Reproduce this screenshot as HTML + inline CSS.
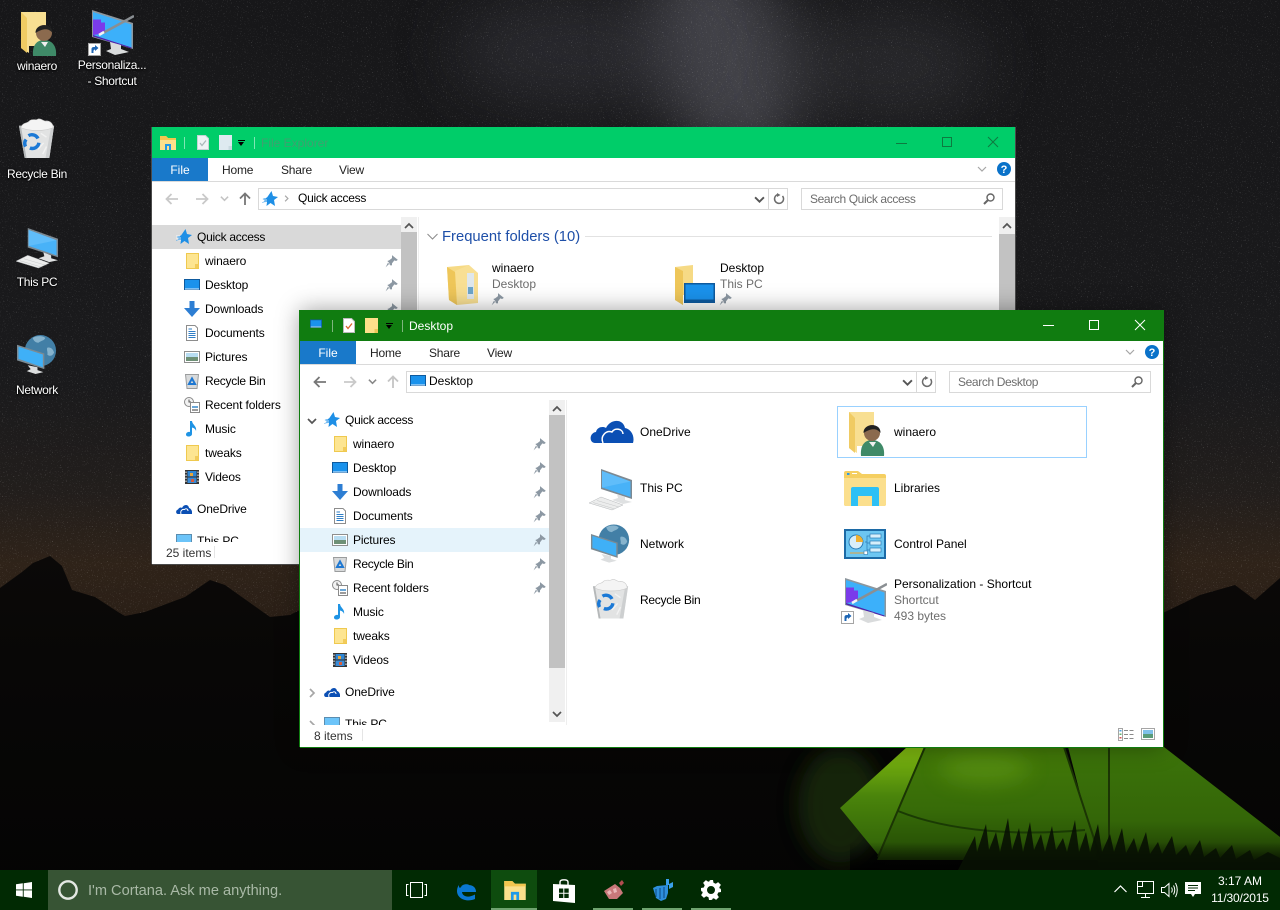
<!DOCTYPE html>
<html><head><meta charset="utf-8"><title>Desktop</title>
<style>
html,body{margin:0;padding:0;width:1280px;height:910px;overflow:hidden;background:#080808;font:12px "Liberation Sans",sans-serif;color:#000}
.a,.r,.w,.w>svg,.l{position:absolute}
.w{left:300px;top:310px;width:863px;height:437px;background:#fff}
.w1{left:152px;top:127px;box-shadow:-1px 0 0 #4a4a4a,1px 0 0 #4a4a4a,0 1px 0 #4a4a4a}
.w2{box-shadow:-1px 0 0 #107c10,1px 0 0 #107c10,0 1px 0 #107c10,0 0 22px rgba(0,0,0,.38)}
.tb{position:absolute;left:0;top:0;width:863px;height:31px}
.w1 .tb{background:#00cd69}.w2 .tb{background:#107c10}
.l{white-space:nowrap;line-height:16px}
.file{position:absolute;left:0;top:31px;width:56px;height:23px;background:#1979ca;color:#fff;line-height:24px;text-align:center}
.tab{color:#222;top:35px;letter-spacing:-.2px}
.hl{position:absolute;left:0;top:54px;width:863px;height:1px;background:#dadada}
.box{position:absolute;top:61px;height:20px;border:1px solid #d9d9d9;background:#fff;box-sizing:content-box}
.side{position:absolute;left:0;top:90px;width:249px;height:325px;overflow:hidden}
.r{left:0;width:249px;height:24px;line-height:24px;padding-left:53px;box-sizing:border-box;white-space:nowrap;letter-spacing:-.12px}
.r>svg{position:absolute;left:32px;top:4px;width:16px;height:16px}
.r>svg.p{left:233px;top:5px;width:14px;height:14px}
.r.t{padding-left:45px}.r.t>svg{left:24px}
.r>svg.x{left:7px;top:8px;width:10px;height:10px}
.n{letter-spacing:-.27px}
.sb{position:absolute;left:249px;top:90px;width:16px;height:322px;background:#f0f0f0}
.th{position:absolute;left:0;top:15px;width:16px;height:253px;background:#c2c2c2}
.g{color:#6d6d6d}
.s{letter-spacing:-.38px}
.dl{position:absolute;color:#fff;text-align:center;text-shadow:0 1px 2px #000,0 0 2px #000;line-height:16px;width:74px;letter-spacing:-.3px}
.tk{position:absolute;left:0;top:870px;width:1280px;height:40px;background:#012a03}
.ul{position:absolute;top:38px;height:2px;background:#6fa36f}
svg{display:block;overflow:visible}
</style></head><body>

<svg class="a" style="left:0;top:0" width="1280" height="910" viewBox="0 0 1280 910">
<defs>
<linearGradient id="sky" x1="0" y1="0" x2="0" y2="1"><stop offset="0" stop-color="#171719"/><stop offset=".42" stop-color="#1a1a1c"/><stop offset=".54" stop-color="#221e1c"/><stop offset=".62" stop-color="#2f2319"/><stop offset=".7" stop-color="#281d15"/><stop offset="1" stop-color="#080706"/></linearGradient>
<linearGradient id="mt" x1="0" y1="0" x2="0" y2="1"><stop offset="0" stop-color="#0b0908"/><stop offset=".3" stop-color="#080706"/><stop offset="1" stop-color="#040404"/></linearGradient>
<filter id="stars" x="0" y="0" width="100%" height="100%"><feTurbulence type="fractalNoise" baseFrequency=".8" numOctaves="2" seed="4"/><feColorMatrix values="0 0 0 0 1 0 0 0 0 1 0 0 0 0 1 4 0 0 0 -2.6"/></filter>
<filter id="bl" x="-100%" y="-100%" width="300%" height="300%"><feGaussianBlur stdDeviation="30"/></filter>
<filter id="bl2" x="-100%" y="-100%" width="300%" height="300%"><feGaussianBlur stdDeviation="10"/></filter>
<linearGradient id="tf" x1="0" y1="0" x2="0" y2="1"><stop offset="0" stop-color="#437a08"/><stop offset=".55" stop-color="#376b08"/><stop offset="1" stop-color="#234a05"/></linearGradient>
<linearGradient id="tr" x1="0" y1="0" x2="0" y2="1"><stop offset="0" stop-color="#3c740a"/><stop offset=".6" stop-color="#346608"/><stop offset="1" stop-color="#173003"/></linearGradient>
<linearGradient id="tl" x1="0" y1="0" x2="0" y2="1"><stop offset="0" stop-color="#82bc10"/><stop offset=".45" stop-color="#4a840b"/><stop offset="1" stop-color="#2f6008"/></linearGradient>
<linearGradient id="fd" x1="0" y1="0" x2="0" y2="1"><stop offset="0" stop-color="#000" stop-opacity="0"/><stop offset="1" stop-color="#000" stop-opacity=".9"/></linearGradient>
</defs>
<rect width="1280" height="910" fill="url(#sky)"/>
<ellipse cx="725" cy="55" rx="70" ry="110" fill="#6e6e78" opacity=".5" filter="url(#bl)" transform="rotate(-18 725 55)"/>
<ellipse cx="580" cy="50" rx="130" ry="55" fill="#3e3e45" opacity=".45" filter="url(#bl)"/>
<ellipse cx="880" cy="65" rx="110" ry="55" fill="#3c3c43" opacity=".42" filter="url(#bl)"/>
<rect width="1280" height="620" filter="url(#stars)" opacity=".27"/>
<path d="M0 588L22 572 33 563 50 556 62 566 72 590 95 597 118 612 125 616 145 612 185 597 210 580 225 585 270 617 290 615 310 605 420 620 600 610 800 630 1100 640 1165 612 1200 595 1235 585 1255 600 1280 578V910H0Z" fill="url(#mt)"/>
<ellipse cx="840" cy="805" rx="42" ry="58" fill="#1c3208" opacity=".7" filter="url(#bl2)"/>
<path d="M907 747H925L880 857 840 808Z" fill="url(#tl)"/>
<path d="M925 747H1064L1101 860H877Z" fill="url(#tf)"/>
<path d="M1068 747H1164L1280 837V870H1100Z" fill="url(#tr)"/>
<ellipse cx="985" cy="768" rx="45" ry="16" fill="#639c12" opacity=".55" filter="url(#bl2)"/>
<path d="M898 811C950 832 1020 836 1085 830" stroke="#1a3a04" stroke-width="2" fill="none"/>
<path d="M925 747L878 857M1064 747L1101 860M1109 747V850" stroke="#1b3504" stroke-width="2" fill="none"/>
<rect x="850" y="842" width="430" height="28" fill="url(#fd)"/>
<path d="M958 870L975 836 977 852 986 824 989 850 996 832 1000 852 1008 818 1012 850 1019 828 1023 852 1030 822 1034 850 1041 834 1045 852 1052 826 1056 850 1063 838 1067 852 1075 820 1079 852 1086 832 1090 852 1098 824 1102 852 1110 834 1114 852 1122 828 1126 853 1134 838 1138 853 1146 832 1150 854 1158 842 1162 854 1172 836 1176 855 1186 845 1190 856 1200 840 1204 857 1216 848 1220 858 1232 845 1236 859 1250 850 1254 860 1268 852 1280 858V870Z" fill="#081103" opacity=".9"/>
</svg>

<svg width="0" height="0" style="position:absolute">
<defs>
<symbol id="pc" viewBox="0 0 44 42"><path d="M12 0L43 11V30L12 20Z" fill="#7d8992"/><path d="M13 2L41.500 12.500V28L13 18.500Z" fill="#48b2f8"/><path d="M13 2L41.500 12.500 13 18.500Z" fill="#60bdfa"/><path d="M28 25L36 28V31L43 33 34 35 23 31 29 29Z" fill="#dfe1e2"/><path d="M0 34L12 28 34 36 23 41Z" fill="#eceded" stroke="#b5b8ba" stroke-width=".5"/><path d="M4 33.500L26 40M8 31.500L30 38" stroke="#c4c6c7" stroke-width=".5"/></symbol>
<symbol id="net" viewBox="0 0 44 42"><circle cx="25" cy="16" r="16" fill="#427fa6"/><path d="M17 3C22 0 28 1 30 3 29 6 25 6 23 8 20 8 18 6 17 3ZM32 13C35 12 38 14 39 18 37 22 34 22 32 20 33 18 31 15 32 13Z" fill="#86b3cd"/><path d="M1 10L29 19V35L1 26Z" fill="#7b8a93"/><path d="M2.500 12L27.500 20V33L2.500 24.500Z" fill="#3fb0f7"/><path d="M12 31L22 33V36L28 38 20 40 11 37 15 35Z" fill="#dcdedf"/></symbol>
<symbol id="bin" viewBox="0 0 40 44"><path d="M1 8L38 8 33 42H7Z" fill="#e2e3e3"/><path d="M1 8L3 8 9 42H7Z" fill="#b5b8b9"/><path d="M38 8L33 42 29 42 35 8Z" fill="#cdcfd0"/><path d="M3 10C5 4 10 6 12 3 15 0 19 3 21 1 25 0 27 4 30 3 34 3 37 6 37 10 28 14 12 14 3 10Z" fill="#f4f4f4" stroke="#c9c9c9" stroke-width=".6"/><path d="M24 16L30 20M27 26L21 33M30 30L26 38" stroke="#f2f2f2" stroke-width="1.500"/><path d="M8 30A7 7 0 0 1 8.500 22.500M11 18.500A7 7 0 0 1 21 21.500M22 26A7 7 0 0 1 12.500 31.500" stroke="#1b79d6" stroke-width="3.600" fill="none"/></symbol>
<symbol id="od" viewBox="0 0 44 26"><path d="M5 25C-1 25-1 15 6 14 7 9 13 8 16 10 20 1 33 0 35 10 41 11 45 18 43 25Z" fill="#0b4fb4"/><path d="M13 25C10 18 16 12 22 14 25 9 33 11 33 16" stroke="#fff" stroke-width="1.500" fill="none"/></symbol>
<symbol id="fu" viewBox="0 0 36 44"><path d="M0 0H25V34H8V41L0 36Z" fill="#f8df92"/><path d="M6 6L0 0V36L6 41Z" fill="#f0cb63"/><path d="M12 44C11 33 16 28 23 28 31 28 36 34 35 44Z" fill="#3f8a68"/><path d="M20 30L24 35 27 30Z" fill="#f0f0f0"/><circle cx="23" cy="21" r="8" fill="#8b6a4e"/><path d="M14.500 21C14 11 32 10 31.500 21 28 16 22 16 14.500 21Z" fill="#222"/></symbol>
<symbol id="lib" viewBox="0 0 42 35"><path d="M0 2Q0 0 2 0H14L18 3H40Q42 3 42 5V33Q42 35 40 35H2Q0 35 0 33Z" fill="#f5cf61"/><path d="M0 7H42V33Q42 35 40 35H2Q0 35 0 33Z" fill="#fbdf8d"/><rect x="3" y="2" width="2.500" height="2" fill="#2b9be8"/><rect x="8" y="2" width="5" height="1" fill="#fff"/><path d="M7 35V18Q7 16 9 16H33Q35 16 35 18V35H28V25H14V35Z" fill="#2dc0f5"/></symbol>
<symbol id="cp" viewBox="0 0 42 30"><rect width="42" height="30" fill="#1c6aa6"/><rect x="2" y="2" width="38" height="26" fill="#6cc6f2"/><circle cx="12" cy="13" r="7" fill="#d9eef9" stroke="#2a7bb5"/><path d="M12 13V6A7 7 0 0 1 19 13Z" fill="#f0b030"/><rect x="26" y="5" width="11" height="4" fill="#d7effb" stroke="#2a7bb5" stroke-width=".7"/><rect x="26" y="12" width="11" height="4" fill="#d7effb" stroke="#2a7bb5" stroke-width=".7"/><rect x="26" y="19" width="11" height="4" fill="#d7effb" stroke="#2a7bb5" stroke-width=".7"/><path d="M21 13H23V7H26M23 14H26M23 13V21H26" stroke="#2a7bb5" fill="none" stroke-width=".7"/><path d="M6 24H24" stroke="#e9a23b" stroke-width="1"/><rect x="20" y="22" width="3.500" height="3.500" fill="#fff" stroke="#2a7bb5" stroke-width=".6"/></symbol>
<symbol id="per" viewBox="0 0 46 46"><path d="M4 0L45 13V39L4 27Z" fill="#8d979e"/><path d="M5 2L43.500 14.500V37.500L5 25Z" fill="#3cb0fa"/><path d="M5 9.500H13V12.500H17V23.500L13 24 5 25Z" fill="#7a3bea"/><path d="M5 25L43.500 37.500V38.500L5 26.500Z" fill="#4b1fb0"/><path d="M15 23L46 6" stroke="#8a8f93" stroke-width="2.500"/><path d="M11 25L16 22" stroke="#f4f4f4" stroke-width="2.500"/><path d="M22 32L33 35V39L41 42 27 45 18 41 23 39Z" fill="#d9dbdc"/><rect x="0.500" y="33.500" width="12" height="12" fill="#fff" stroke="#a5a5a5"/><path d="M3.500 43V39Q3.500 37 6 37H7V35L10.500 38 7 41V39.500Q5 39.500 5.500 43Z" fill="#1e66b4"/></symbol>
<symbol id="sfld" viewBox="0 0 16 16"><path d="M2.500.500H14.500V15.500H2.500Z" fill="#fde591" stroke="#efc94f"/><path d="M11 11V15H14.500V11Z" fill="#f2cb5a"/></symbol>
<symbol id="sdk" viewBox="0 0 16 16"><rect x="0" y="2" width="16" height="11" fill="#0e5a9e"/><rect x="1" y="3" width="14" height="8.500" fill="#1a92ec"/><rect x="1" y="11.500" width="14" height="1" fill="#dcefff"/></symbol>
<symbol id="sdl" viewBox="0 0 16 16"><path d="M5.500 0H10.500V7H16L8 16 0 7H5.500Z" fill="#2d7ed3"/></symbol>
<symbol id="sdoc" viewBox="0 0 16 16"><path d="M2.500.500H11L13.500 3V15.500H2.500Z" fill="#fff" stroke="#8d8d8d"/><path d="M4.500 4H8M4.500 6.500H11.500M4.500 8.500H11.500M4.500 10.500H11.500M4.500 12.500H11.500" stroke="#2f7ec6"/></symbol>
<symbol id="spic" viewBox="0 0 16 16"><rect x=".5" y="2.500" width="15" height="11" fill="#fff" stroke="#8e8e8e"/><rect x="2" y="4" width="12" height="4" fill="#b8ddf2"/><rect x="2" y="8" width="12" height="4" fill="#6e9076"/></symbol>
<symbol id="sbin" viewBox="0 0 16 16"><path d="M1.500 1.500H14.500L13 15.500H3Z" fill="#d8dadb" stroke="#9a9c9d"/><path d="M5 11L8 5.500 11 11Z" fill="none" stroke="#1e78d2" stroke-width="2"/></symbol>
<symbol id="srec" viewBox="0 0 16 16"><circle cx="5" cy="5" r="4.500" fill="#f2f2f2" stroke="#8a8a8a"/><path d="M5 2.500V5H7" stroke="#555" fill="none"/><rect x="6.500" y="5.500" width="9" height="10" fill="#fff" stroke="#8a8a8a"/><rect x="8" y="9" width="6" height="2" fill="#6aa6d6"/><rect x="8" y="12" width="6" height="2" fill="#9b9b9b"/></symbol>
<symbol id="smus" viewBox="0 0 16 16"><path d="M6 0H8C8.500 4 13 5 12 10 11.500 8 10 7 8 6.500V13C8 16 2 16.500 2 13.500 2 11 5 10.500 6 11Z" fill="#1e93e4"/></symbol>
<symbol id="svid" viewBox="0 0 16 16"><rect x="1" y="1" width="14" height="14" fill="#333"/><rect x="3.500" y="2" width="9" height="5.500" fill="#2f86d4"/><rect x="3.500" y="8.500" width="9" height="5.500" fill="#3a8bd6"/><rect x="6" y="4" width="3" height="3" fill="#e8a53a"/><rect x="7" y="10" width="3" height="3" fill="#d95c3a"/><path d="M2 2.500V14M14 2.500V14" stroke="#fff" stroke-width="1" stroke-dasharray="1.500 1.500"/></symbol>
<symbol id="sod" viewBox="0 0 16 16"><path d="M2 13C-.5 13 -.5 9 2 8.500 3 6.500 5 6 6 7 7.500 3 12.500 3 13 7 15.500 7.500 16.500 11 16 13Z" fill="#0b4fb4"/><path d="M5 13C4 10 6 8 8.500 8.500 10 7 12 8 12 10" stroke="#fff" fill="none"/></symbol>
<symbol id="spc" viewBox="0 0 16 16"><rect x=".5" y="1.500" width="15" height="11" fill="#6cc4f9" stroke="#5a8db0"/></symbol>
<symbol id="star" viewBox="0 0 16 16"><path d="M9.500 0L11 5 16 6 12 9 13 15 8.500 12 4.500 15 5 11 0 12 3 9 .5 8 5 6.500Z" fill="#1e8fe6"/><path d="M0 9H5M1 11H5M0 7H4" stroke="#fff" stroke-width=".7"/></symbol>
<symbol id="pin" viewBox="0 0 12 12"><path d="M6 1L11 5 9.500 6 8 5.500 6 8V9.500L5 10 2.500 7.500.5 11.500 4 8 2 6 3.500 5.500 6 3.500Z" fill="#8c98a3"/></symbol>
<symbol id="cd" viewBox="0 0 10 10"><path d="M1 3L5 7 9 3" fill="none" stroke="#555" stroke-width="1.700"/></symbol>
<symbol id="cr" viewBox="0 0 10 10"><path d="M3 1L7 5 3 9" fill="none" stroke="#a6a6a6" stroke-width="1.700"/></symbol>
<symbol id="ca" viewBox="0 0 10 10"><path d="M1 7L5 3 9 7" fill="none" stroke="#555" stroke-width="1.700"/></symbol>
<symbol id="back" viewBox="0 0 14 12"><path d="M13 6H2M6.500 1L1.500 6 6.500 11" fill="none" stroke="currentColor" stroke-width="1.800"/></symbol>
<symbol id="up" viewBox="0 0 12 14"><path d="M6 13V2M1 6.500L6 1.500 11 6.500" fill="none" stroke="currentColor" stroke-width="1.800"/></symbol>
<symbol id="rf" viewBox="0 0 12 12"><path d="M9.500 3A4.500 4.500 0 1 1 5 1.500" fill="none" stroke="#6c6c6c" stroke-width="1.500"/><path d="M4 0V4L7.500 2Z" fill="#6c6c6c"/></symbol>
<symbol id="mag" viewBox="0 0 12 12"><circle cx="7.500" cy="4.500" r="3.500" fill="none" stroke="#666" stroke-width="1.400"/><path d="M5 7L1 11" stroke="#666" stroke-width="2"/></symbol>
<symbol id="help" viewBox="0 0 14 14"><circle cx="7" cy="7" r="7" fill="#0a72c9"/><text x="7" y="11" font-size="11" font-weight="bold" text-anchor="middle" fill="#fff" font-family="Liberation Sans">?</text></symbol>
<symbol id="chk" viewBox="0 0 12 15"><path d="M.5.500H8.500L11.500 3.500V14.500H.5Z" fill="#fff" stroke="#bbb"/><path d="M3 8L5 10.500 9 5.500" fill="none" stroke="#d9622b" stroke-width="1.300"/></symbol>
<symbol id="chkg" viewBox="0 0 12 15"><path d="M.5.500H8.500L11.500 3.500V14.500H.5Z" fill="#eef3f5" stroke="#c5d3d5"/><path d="M3 8L5 10.500 9 5.500" fill="none" stroke="#a9b9bb" stroke-width="1.300"/></symbol>
<symbol id="pfld" viewBox="0 0 13 15"><path d="M0 0H13V15H0Z" fill="#fde08a"/><path d="M9.500 11V15H13V11Z" fill="#edc65a"/></symbol>
<symbol id="pfldg" viewBox="0 0 13 15"><path d="M0 0H13V15H0Z" fill="#deeaf0"/><path d="M9.500 11V15H13V11Z" fill="#c8d9df"/></symbol>
<symbol id="fexp" viewBox="0 0 16 14"><path d="M0 0H6L8 2H16V14H0Z" fill="#fbe08c"/><path d="M0 0H6L8 2H16V4H0Z" fill="#f2c64f"/><path d="M5 14V8H11V14H9V10H7V14Z" fill="#1f9ae8"/></symbol>
<symbol id="ffl" viewBox="0 0 32 40"><path d="M0 2L22 0V32H10V40L2 35Z" fill="#f6da85"/><path d="M8 6L22 0 31 8V38L10 40Z" fill="#f8df93"/><path d="M20 8H27V34H20Z" fill="#dfe7ec"/><path d="M21 22H26V29H21Z" fill="#6ca5ca"/><path d="M0 2L8 7 10 40 2 35Z" fill="#eec659"/></symbol>
<symbol id="fdk" viewBox="0 0 40 40"><path d="M0 2L18 0V30H8V40L0 35Z" fill="#f6da85"/><path d="M0 2L8 6V40L0 35Z" fill="#eec659"/><rect x="9" y="18" width="31" height="20" fill="#0e5a9e"/><rect x="10.500" y="19.500" width="28" height="15" fill="#1a92ec"/></symbol>
</defs></svg>

<svg class="a" style="left:21px;top:12px" width="36" height="44"><use href="#fu"/></svg>
<div class="dl" style="left:0;top:58px">winaero</div>
<svg class="a" style="left:88px;top:10px" width="46" height="46"><use href="#per"/></svg>
<div class="dl" style="left:74px;top:57px;width:76px">Personaliza...<br>- Shortcut</div>
<svg class="a" style="left:18px;top:117px" width="38" height="44"><use href="#bin"/></svg>
<div class="dl" style="left:0;top:166px">Recycle Bin</div>
<svg class="a" style="left:16px;top:228px" width="43" height="41"><use href="#pc"/></svg>
<div class="dl" style="left:0;top:274px">This PC</div>
<svg class="a" style="left:16px;top:335px" width="43" height="41"><use href="#net"/></svg>
<div class="dl" style="left:0;top:382px">Network</div>

<!-- WINDOW 1 -->
<div class="w w1">
<div class="tb"></div>
<svg style="left:8px;top:9px" width="16" height="14"><use href="#fexp"/></svg>
<div class="a" style="left:32px;top:10px;width:1px;height:12px;background:#7fe6b4"></div>
<svg style="left:45px;top:8px" width="12" height="15"><use href="#chkg"/></svg>
<svg style="left:67px;top:8px" width="13" height="15"><use href="#pfldg"/></svg>
<div class="a" style="left:86px;top:13px;width:7px;height:1px;background:#000"></div><div class="a" style="left:86px;top:15px;border:3.500px solid transparent;border-top:4px solid #000;border-bottom:0"></div>
<div class="a" style="left:102px;top:10px;width:1px;height:12px;background:#7fe6b4"></div>
<div class="l" style="left:109px;top:8px;color:#3fa070">File Explorer</div>
<div class="a" style="left:744px;top:16px;width:11px;height:1px;background:#0e7a40"></div>
<div class="a" style="left:790px;top:10px;width:8px;height:8px;border:1px solid #0e7a40"></div>
<svg style="left:836px;top:10px" width="10" height="10"><path d="M0 0L10 10M10 0L0 10" stroke="#0e7a40"/></svg>
<div class="file">File</div>
<div class="l tab" style="left:70px">Home</div><div class="l tab" style="left:129px">Share</div><div class="l tab" style="left:187px">View</div>
<svg style="left:825px;top:37px" width="10" height="10"><path d="M1 3L5 7 9 3" fill="none" stroke="#a6a6a6" stroke-width="1.200"/></svg>
<svg style="left:845px;top:35px" width="14" height="14"><use href="#help"/></svg>
<div class="hl"></div>
<svg style="left:13px;top:66px;color:#c9c9c9" width="14" height="12"><use href="#back"/></svg>
<svg style="left:43px;top:66px;color:#c9c9c9" width="14" height="12"><use href="#back" transform="matrix(-1 0 0 1 14 0)"/></svg>
<svg style="left:68px;top:67px;opacity:.35" width="9" height="9"><use href="#cd"/></svg>
<svg style="left:87px;top:65px;color:#777" width="12" height="14"><use href="#up"/></svg>
<div class="box" style="left:106px;width:528px"></div>
<svg style="left:110px;top:64px" width="16" height="16"><use href="#star"/></svg>
<svg style="left:131px;top:68px" width="7" height="7"><use href="#cr"/></svg>
<div class="l n" style="left:146px;top:63px">Quick access</div>
<div class="a" style="left:616px;top:61px;width:1px;height:22px;background:#d9d9d9"></div>
<svg style="left:602px;top:67px" width="11" height="11"><use href="#cd"/></svg>
<svg style="left:621px;top:66px" width="12" height="12"><use href="#rf"/></svg>
<div class="box" style="left:649px;width:200px"></div>
<div class="l g s" style="left:658px;top:64px">Search Quick access</div>
<svg style="left:831px;top:66px" width="12" height="12"><use href="#mag"/></svg>
<div class="side">
<div class="r t n" style="top:8px;background:#d9d9d9"><svg><use href="#star"/></svg>Quick access</div>
<div class="r" style="top:32px"><svg><use href="#sfld"/></svg>winaero<svg class="p"><use href="#pin"/></svg></div>
<div class="r" style="top:56px"><svg><use href="#sdk"/></svg>Desktop<svg class="p"><use href="#pin"/></svg></div>
<div class="r" style="top:80px"><svg><use href="#sdl"/></svg>Downloads<svg class="p"><use href="#pin"/></svg></div>
<div class="r" style="top:104px"><svg><use href="#sdoc"/></svg>Documents</div>
<div class="r" style="top:128px"><svg><use href="#spic"/></svg>Pictures</div>
<div class="r n" style="top:152px"><svg><use href="#sbin"/></svg>Recycle Bin</div>
<div class="r" style="top:176px"><svg><use href="#srec"/></svg>Recent folders</div>
<div class="r" style="top:200px"><svg><use href="#smus"/></svg>Music</div>
<div class="r" style="top:224px"><svg><use href="#sfld"/></svg>tweaks</div>
<div class="r" style="top:248px"><svg><use href="#svid"/></svg>Videos</div>
<div class="r t" style="top:280px"><svg><use href="#sod"/></svg>OneDrive</div>
<div class="r t" style="top:312px"><svg><use href="#spc"/></svg>This PC</div>
</div>
<div class="sb"><div class="th"></div><svg class="a" style="left:3px;top:4px" width="10" height="10"><use href="#ca"/></svg></div>
<div class="a" style="left:266px;top:90px;width:1px;height:325px;background:#eee"></div>
<svg style="left:275px;top:104px" width="11" height="11"><path d="M.5 3L5.500 8 10.500 3" fill="none" stroke="#8a8a8a"/></svg>
<div class="l" style="left:290px;top:102px;font-size:14.800px;color:#1e4fa8">Frequent folders (10)</div>
<div class="a" style="left:433px;top:109px;width:407px;height:1px;background:#e2e2e2"></div>
<svg style="left:295px;top:138px" width="32" height="40"><use href="#ffl"/></svg>
<div class="l" style="left:340px;top:133px">winaero</div><div class="l g" style="left:340px;top:149px">Desktop</div>
<svg style="left:339px;top:165px" width="14" height="14"><use href="#pin"/></svg>
<svg style="left:523px;top:138px" width="40" height="40"><use href="#fdk"/></svg>
<div class="l" style="left:568px;top:133px">Desktop</div><div class="l g" style="left:568px;top:149px">This PC</div>
<svg style="left:567px;top:165px" width="14" height="14"><use href="#pin"/></svg>
<div class="a" style="left:847px;top:90px;width:16px;height:347px;background:#f0f0f0"><div class="a" style="left:0;top:17px;width:16px;height:330px;background:#c2c2c2"></div><svg class="a" style="left:3px;top:4px" width="10" height="10"><use href="#ca"/></svg></div>
<div class="l" style="left:14px;top:418px;color:#333">25 items</div>
<div class="a" style="left:62px;top:419px;width:1px;height:12px;background:#e5e5e5"></div>
</div>

<!-- WINDOW 2 -->
<div class="w w2">
<div class="tb"></div>
<svg style="left:8px;top:10px" width="16" height="12" viewBox="0 2 16 12"><use href="#sdk"/></svg>
<div class="a" style="left:32px;top:10px;width:1px;height:12px;background:#7fb57f"></div>
<svg style="left:43px;top:8px" width="12" height="15"><use href="#chk"/></svg>
<svg style="left:65px;top:8px" width="13" height="15"><use href="#pfld"/></svg>
<div class="a" style="left:86px;top:13px;width:7px;height:1px;background:#000"></div><div class="a" style="left:86px;top:15px;border:3.500px solid transparent;border-top:4px solid #000;border-bottom:0"></div>
<div class="a" style="left:102px;top:10px;width:1px;height:12px;background:#7fb57f"></div>
<div class="l" style="left:109px;top:8px;color:#fff">Desktop</div>
<div class="a" style="left:743px;top:15px;width:11px;height:1px;background:#fff"></div>
<div class="a" style="left:789px;top:10px;width:8px;height:8px;border:1px solid #fff"></div>
<svg style="left:835px;top:10px" width="10" height="10"><path d="M0 0L10 10M10 0L0 10" stroke="#fff"/></svg>
<div class="file">File</div>
<div class="l tab" style="left:70px">Home</div><div class="l tab" style="left:129px">Share</div><div class="l tab" style="left:187px">View</div>
<svg style="left:825px;top:37px" width="10" height="10"><path d="M1 3L5 7 9 3" fill="none" stroke="#a6a6a6" stroke-width="1.200"/></svg>
<svg style="left:845px;top:35px" width="14" height="14"><use href="#help"/></svg>
<div class="hl"></div>
<svg style="left:13px;top:66px;color:#777" width="14" height="12"><use href="#back"/></svg>
<svg style="left:43px;top:66px;color:#c9c9c9" width="14" height="12"><use href="#back" transform="matrix(-1 0 0 1 14 0)"/></svg>
<svg style="left:68px;top:67px;opacity:.7" width="9" height="9"><use href="#cd"/></svg>
<svg style="left:87px;top:65px;color:#c4c4c4" width="12" height="14"><use href="#up"/></svg>
<div class="box" style="left:106px;width:528px"></div>
<svg style="left:110px;top:63px" width="16" height="16"><use href="#sdk"/></svg>
<div class="l" style="left:129px;top:63px">Desktop</div>
<div class="a" style="left:616px;top:61px;width:1px;height:22px;background:#d9d9d9"></div>
<svg style="left:602px;top:67px" width="11" height="11"><use href="#cd"/></svg>
<svg style="left:621px;top:66px" width="12" height="12"><use href="#rf"/></svg>
<div class="box" style="left:649px;width:200px"></div>
<div class="l g s" style="left:658px;top:64px">Search Desktop</div>
<svg style="left:831px;top:66px" width="12" height="12"><use href="#mag"/></svg>
<div class="side">
<div class="r t n" style="top:8px"><svg class="x"><use href="#cd"/></svg><svg><use href="#star"/></svg>Quick access</div>
<div class="r" style="top:32px"><svg><use href="#sfld"/></svg>winaero<svg class="p"><use href="#pin"/></svg></div>
<div class="r" style="top:56px"><svg><use href="#sdk"/></svg>Desktop<svg class="p"><use href="#pin"/></svg></div>
<div class="r" style="top:80px"><svg><use href="#sdl"/></svg>Downloads<svg class="p"><use href="#pin"/></svg></div>
<div class="r" style="top:104px"><svg><use href="#sdoc"/></svg>Documents<svg class="p"><use href="#pin"/></svg></div>
<div class="r" style="top:128px;background:#e5f3fb"><svg><use href="#spic"/></svg>Pictures<svg class="p"><use href="#pin"/></svg></div>
<div class="r n" style="top:152px"><svg><use href="#sbin"/></svg>Recycle Bin<svg class="p"><use href="#pin"/></svg></div>
<div class="r" style="top:176px"><svg><use href="#srec"/></svg>Recent folders<svg class="p"><use href="#pin"/></svg></div>
<div class="r" style="top:200px"><svg><use href="#smus"/></svg>Music</div>
<div class="r" style="top:224px"><svg><use href="#sfld"/></svg>tweaks</div>
<div class="r" style="top:248px"><svg><use href="#svid"/></svg>Videos</div>
<div class="r t" style="top:280px"><svg class="x"><use href="#cr"/></svg><svg><use href="#sod"/></svg>OneDrive</div>
<div class="r t" style="top:312px"><svg class="x"><use href="#cr"/></svg><svg><use href="#spc"/></svg>This PC</div>
</div>
<div class="sb"><div class="th"></div><svg class="a" style="left:3px;top:4px" width="10" height="10"><use href="#ca"/></svg><svg class="a" style="left:3px;top:309px" width="10" height="10"><use href="#cd"/></svg></div>
<div class="a" style="left:266px;top:90px;width:1px;height:325px;background:#eee"></div>
<svg style="left:290px;top:108px" width="44" height="26"><use href="#od"/></svg>
<div class="l" style="left:340px;top:114px">OneDrive</div>
<svg style="left:289px;top:159px" width="44" height="42"><use href="#pc"/></svg>
<div class="l" style="left:340px;top:170px">This PC</div>
<svg style="left:290px;top:214px" width="42" height="41"><use href="#net"/></svg>
<div class="l" style="left:340px;top:226px">Network</div>
<svg style="left:292px;top:268px" width="38" height="43"><use href="#bin"/></svg>
<div class="l n" style="left:340px;top:282px">Recycle Bin</div>
<div class="a" style="left:537px;top:96px;width:248px;height:50px;border:1px solid #99d1ff"></div>
<svg style="left:549px;top:102px" width="36" height="44"><use href="#fu"/></svg>
<div class="l" style="left:594px;top:114px">winaero</div>
<svg style="left:544px;top:161px" width="42" height="35"><use href="#lib"/></svg>
<div class="l" style="left:594px;top:170px">Libraries</div>
<svg style="left:544px;top:219px" width="42" height="30"><use href="#cp"/></svg>
<div class="l" style="left:594px;top:226px">Control Panel</div>
<svg style="left:541px;top:268px" width="46" height="46"><use href="#per"/></svg>
<div class="l" style="left:594px;top:266px">Personalization - Shortcut</div>
<div class="l g" style="left:594px;top:282px">Shortcut</div>
<div class="l g" style="left:594px;top:298px">493 bytes</div>
<div class="l" style="left:14px;top:418px;color:#333">8 items</div>
<div class="a" style="left:62px;top:419px;width:1px;height:12px;background:#e5e5e5"></div>
<svg style="left:818px;top:418px" width="16" height="13"><rect x=".5" y=".5" width="4" height="12" fill="#fff" stroke="#a5a5a5"/><path d="M6 2.500H16M6 6.500H16M6 10.500H16" stroke="#8a8a8a" stroke-dasharray="4 1.500" stroke-width="1"/><rect x="1.500" y="2" width="2" height="1.500" fill="#4aa3e0"/><rect x="1.500" y="5.500" width="2" height="1.500" fill="#5fb36b"/><rect x="1.500" y="9" width="2" height="1.500" fill="#d9534f"/></svg>
<svg style="left:841px;top:418px" width="14" height="12"><rect x=".5" y=".5" width="13" height="11" fill="#fff" stroke="#a5a5a5"/><rect x="2" y="2" width="10" height="4" fill="#7fc0e8"/><rect x="2" y="6" width="10" height="4" fill="#5a9b78"/></svg>
</div>

<!-- TASKBAR -->
<div class="tk">
<svg class="a" style="left:16px;top:12px" width="16" height="16"><path d="M0 2.300L6.800 1.300V7.500H0ZM7.700 1.200L16 0V7.500H7.700ZM0 8.400H6.800V14.700L0 13.700ZM7.700 8.400H16V16L7.700 14.800Z" fill="#fff"/></svg>
<div class="a" style="left:48px;top:0;width:344px;height:40px;background:#375434"></div>
<svg class="a" style="left:58px;top:10px" width="20" height="20"><circle cx="10" cy="10" r="8.700" fill="none" stroke="#e4e8e3" stroke-width="2.400"/></svg>
<div class="l" style="left:88px;top:13px;font-size:14.600px;color:#a9b9a6">I'm Cortana. Ask me anything.</div>
<svg class="a" style="left:406px;top:12px" width="21" height="16"><rect x="4.500" y=".5" width="12" height="15" fill="none" stroke="#fff"/><path d="M2.500 2.500H.5V13.500H2.500M18.500 2.500H20.500V13.500H18.500" fill="none" stroke="#fff"/></svg>
<svg class="a" style="left:456px;top:10px" width="21" height="21" viewBox="0 0 21 21"><path d="M20 12H6C6.500 17 13 18 19 14.500V19C11 22.500 1 19 1 11 1 5 6 0 11 .5 5.500 .5 .5 5 4 8 6 3 15 3 15 8H6.500C7 6 4.500 6 4 8 8 4 20 3 20 12Z" fill="#0a78d2"/></svg>
<div class="a" style="left:491px;top:0;width:46px;height:40px;background:#0e4c0e"></div>
<svg class="a" style="left:504px;top:11px" width="22" height="19" viewBox="0 0 16 14"><use href="#fexp"/></svg>
<svg class="a" style="left:553px;top:9px" width="22" height="24" viewBox="0 0 22 24"><path d="M7 6V3Q7 .8 11 .8 15 .8 15 3V6" stroke="#fff" fill="none" stroke-width="1.400"/><path d="M0 5L22 6V24L0 22Z" fill="#fff"/><path d="M6 9.500H10.300V13.700H6ZM11.300 9.500H15.700V13.700H11.300ZM6 14.700H10.300V19H6ZM11.300 14.700H15.700V19H11.300Z" fill="#012a03"/></svg>
<svg class="a" style="left:603px;top:9px" width="22" height="22"><path d="M1 12L12 5 17 9 20 14 14 20 6 20Z" fill="#c8787a"/><path d="M4 13L7 11 9 14 6 16ZM10 10L13 9 14 13 11 14Z" fill="#e9b7b8"/><path d="M16 4L19 1 21 4 18 7Z" fill="#b14d50"/></svg>
<svg class="a" style="left:653px;top:8px" width="20" height="24"><path d="M0 10L4 8 15 7V15L13 21 8 23 3 20Z" fill="#2e8fdc"/><path d="M3 11V19M7 10V21M11 9V20" stroke="#0c4a82"/><path d="M13 1H16V7H13ZM16 6L20 4V9L16 11Z" fill="#3aa0ea"/></svg>
<svg class="a" style="left:701px;top:10px" width="20" height="20" viewBox="0 0 20 20"><path fill="#fff" fill-rule="evenodd" d="M8 0H12L12.500 2.800 14.800 3.700 17.100 2.100 19.900 4.900 18.300 7.200 19.200 9.500 20 8V12L17.200 12.500 16.300 14.800 17.900 17.100 15.100 19.900 12.800 18.300 10.500 19.200 12 20H8L7.500 17.200 5.200 16.300 2.900 17.900.1 15.100 1.700 12.800.8 10.500 0 12V8L2.800 7.500 3.700 5.200 2.100 2.900 4.900.1 7.200 1.700 9.500.8 8 0ZM10 6A4 4 0 1 0 10 14 4 4 0 0 0 10 6Z"/></svg>
<div class="ul" style="left:491px;width:46px"></div><div class="ul" style="left:593px;width:40px"></div><div class="ul" style="left:642px;width:40px"></div><div class="ul" style="left:691px;width:40px"></div>
<svg class="a" style="left:1114px;top:14px" width="13" height="10"><path d="M.5 8L6.500 2 12.500 8" fill="none" stroke="#fff" stroke-width="1.200"/></svg>
<svg class="a" style="left:1137px;top:11px" width="17" height="18"><path d="M.5 .5H16.500V12.500H.5ZM8.500 12.500V16.500M4 16.500H13" fill="none" stroke="#fff"/><rect x=".5" y=".5" width="5" height="5" fill="#012a03" stroke="#fff"/></svg>
<svg class="a" style="left:1161px;top:11px" width="17" height="18"><path d="M.5 6.500H3.500L8 2.500V15.500L3.500 11.500H.5Z" fill="none" stroke="#fff"/><path d="M10.500 6.500Q12 9 10.500 11.500M12.500 4.500Q15 9 12.500 13.500M14.500 2Q18 9 14.500 16" fill="none" stroke="#fff"/></svg>
<svg class="a" style="left:1185px;top:12px" width="16" height="16"><path d="M0 0H16V12H10L8 15 6 12H0Z" fill="#fff"/><path d="M3 3.500H13M3 6H13M3 8.500H10" stroke="#012a03"/></svg>
<div class="l" style="left:1208px;top:3px;width:64px;text-align:center;color:#fff">3:17 AM</div>
<div class="l" style="left:1208px;top:20px;width:64px;text-align:center;color:#fff;letter-spacing:-.15px">11/30/2015</div>
</div>
</body></html>
